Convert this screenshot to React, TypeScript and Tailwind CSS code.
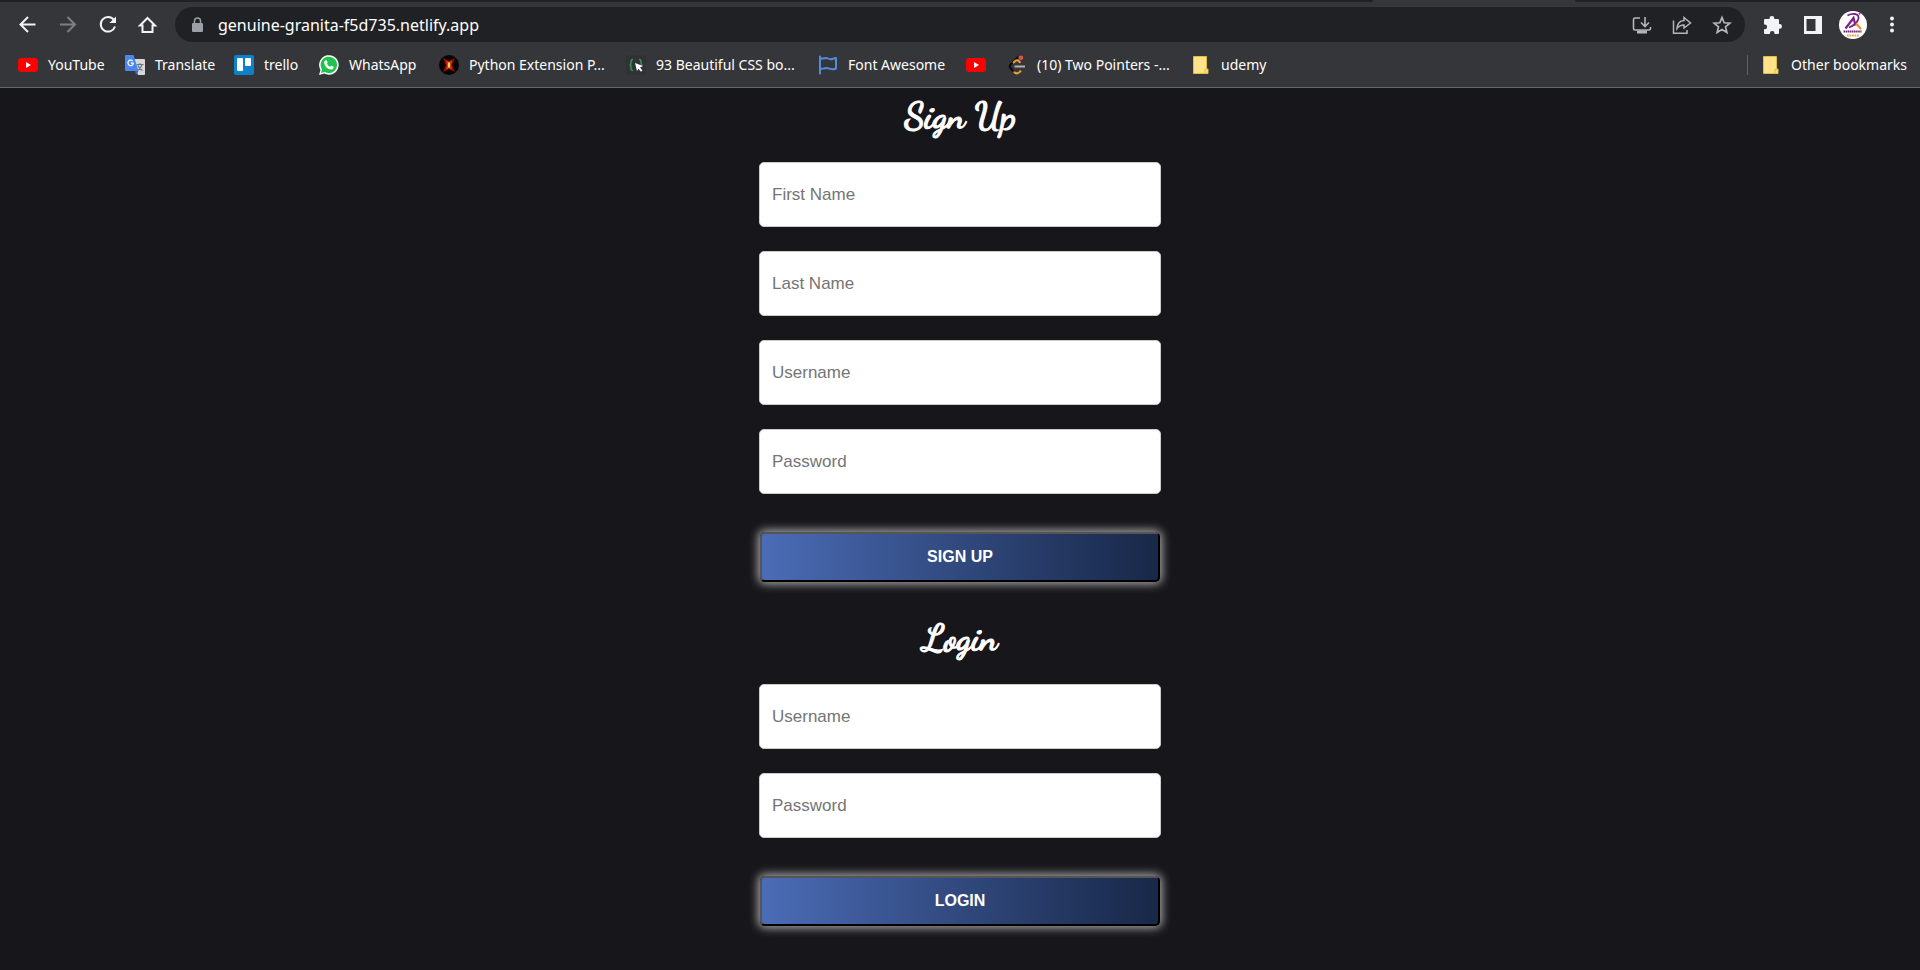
import React from "react";

const ui = "font-['Segoe_UI','Noto_Sans',sans-serif]";

const YouTubeIcon = () => (
  <svg width="20" height="20" viewBox="0 0 20 20" aria-hidden="true">
    <rect y="3" width="20" height="14" rx="3.5" fill="#f00" />
    <path d="M8 7v6l5-3z" fill="#fff" />
  </svg>
);

const TranslateIcon = () => (
  <svg width="20" height="20" viewBox="0 0 20 20" aria-hidden="true">
    <path d="M8 4h11q1 0 1 1v14q0 1-1 1h-6z" fill="#d8d8d8" />
    <path d="M11.5 9.5h7M15 8v1.500M17 9.500q-1 4-4.500 6M13 10.500q1 3 4.500 5" stroke="#607988" strokeWidth="1.100" fill="none" />
    <path d="M1 0h7.500l5 16H1q-1 0-1-1V1q0-1 1-1z" fill="#4a86ee" />
    <path d="M10 16h3.500L11 20z" fill="#3367d6" />
    <path d="M7.700 6.200A2.700 2.700 0 1 0 8.300 8.200H5.800" stroke="#fff" strokeWidth="1.200" fill="none" />
  </svg>
);

const TrelloIcon = () => (
  <svg width="20" height="20" viewBox="0 0 20 20" aria-hidden="true">
    <rect width="20" height="20" rx="2" fill="#0c82cd" />
    <rect x="3" y="3" width="6" height="13" rx="1" fill="#fff" />
    <rect x="11" y="3" width="6" height="8" rx="1" fill="#fff" />
  </svg>
);

const WhatsAppIcon = () => (
  <svg width="20" height="20" viewBox="0 0 20 20" aria-hidden="true">
    <path d="M0 20l1.500-5A9.800 9.800 0 1 1 5.300 18.600z" fill="#fff" />
    <path d="M2 18l1-3.600A8.200 8.200 0 1 1 5.800 17z" fill="#1fc24c" />
    <path d="M6.500 5.300h1.200l1 2.300-.8 1.200q1.200 2.300 3.400 3l1-1.200 2.300 1.100q.2 2.500-2.300 2.700-5.500-.5-7.200-6.500 0-1.700 1.400-2.600z" fill="#fff" />
  </svg>
);

const PythonExtIcon = () => (
  <svg width="20" height="20" viewBox="0 0 20 20" aria-hidden="true">
    <circle cx="10" cy="10" r="10" fill="#0a0303" />
    <path d="M4 3l6 3 6-3-3 7 3 7-6-3-6 3 3-7z" fill="#8c1004" />
    <path d="M7 5.500l3 1.500 3-1.500-1 4.500 1 4.500-3-1.500-3 1.500 1-4.500z" fill="#e8360a" />
    <path d="M9 7.500h2v5H9z" fill="#ffd84a" />
  </svg>
);

const CssIcon = () => (
  <svg width="20" height="20" viewBox="0 0 20 20" aria-hidden="true">
    <rect width="20" height="20" rx="2" fill="#303233" />
    <path d="M7 4.500q-2 0-2 2v2q0 1.500-1.500 1.500Q5 10 5 11.500v2q0 2 2 2M13 4.500q2 0 2 2v2q0 1.500 1.500 1.500" stroke="#2f9558" strokeWidth="1.500" fill="none" />
    <path d="M9 8l8 3-3 1.500 2.500 3-1.500 1.200-2.500-3L11 16z" fill="#fff" />
  </svg>
);

const FlagIcon = () => (
  <svg width="20" height="20" viewBox="0 0 20 20" aria-hidden="true">
    <path d="M2 1.500v17M2 3.500h3.500q2.500-1.200 4.500 0t5 .2l3-.700v10.500q-3.500 1.500-6.500.2T6 13.500l-4 .3" stroke="#538dd8" strokeWidth="2" fill="none" strokeLinecap="round" strokeLinejoin="round" />
  </svg>
);

const LeetIcon = () => (
  <svg width="20" height="20" viewBox="0 0 20 20" aria-hidden="true">
    <path d="M11 2L3.500 9.500q-1.500 1.800 0 3.500L6 16" stroke="#0b0b0b" strokeWidth="2" fill="none" />
    <path d="M6 8l2.500-2.300q1.500-1 3 0l2 2M7 17q2.500 2.500 5 .5l2-1.800" stroke="#f0a030" strokeWidth="2" fill="none" />
    <path d="M7.500 11.500H18" stroke="#b3b3b3" strokeWidth="2" />
    <circle cx="14" cy="2.700" r="2.300" fill="#d9534f" />
  </svg>
);

const FolderIcon = () => (
  <svg width="20" height="20" viewBox="0 0 20 20" aria-hidden="true">
    <path d="M2.500 1.500h13v12.500h1.500v4.500H2.500z" fill="#ffe28a" stroke="#e3bc3c" />
    <path d="M14 18v-4h2" fill="none" stroke="#e3bc3c" />
  </svg>
);

const bookmarks = [
  { label: "YouTube", icon: <YouTubeIcon />, width: "w-[107px]" },
  { label: "Translate", icon: <TranslateIcon />, width: "w-[109px]" },
  { label: "trello", icon: <TrelloIcon />, width: "w-[85px]" },
  { label: "WhatsApp", icon: <WhatsAppIcon />, width: "w-[120px]" },
  { label: "Python Extension P...", icon: <PythonExtIcon />, width: "w-[187px]" },
  { label: "93 Beautiful CSS bo...", icon: <CssIcon />, width: "w-[192px]" },
  { label: "Font Awesome", icon: <FlagIcon />, width: "w-[148px]" },
  { label: "", icon: <YouTubeIcon />, width: "w-[41px]" },
  { label: "(10) Two Pointers -...", icon: <LeetIcon />, width: "w-[184px]" },
  { label: "udemy", icon: <FolderIcon />, width: "w-[80px]" },
];

function IconButton({ label, children }: { label: string; children: React.ReactNode }) {
  return (
    <button type="button" aria-label={label} className="flex size-5 shrink-0 items-center justify-center">
      {children}
    </button>
  );
}

function Toolbar() {
  return (
    <div className="flex h-10 items-center px-[18px] pt-[5px]">
      <div className="flex gap-5 text-[#f1f3f4]">
        <IconButton label="Back">
          <svg width="20" height="20" viewBox="0 0 20 20" fill="none" stroke="currentColor" strokeWidth="2"><path d="M17.500 9.500H3M10 2L2.500 9.500 10 17" /></svg>
        </IconButton>
        <IconButton label="Forward">
          <svg width="20" height="20" viewBox="0 0 20 20" fill="none" stroke="#7d7f82" strokeWidth="2"><path d="M2 9.500h14.500M9.500 2L17 9.500 9.500 17" /></svg>
        </IconButton>
        <IconButton label="Reload">
          <svg width="20" height="20" viewBox="0 0 20 20" fill="none" stroke="currentColor" strokeWidth="2"><path d="M16 5A7.300 7.300 0 1 0 17 11.500" /><path d="M18 1.500V8h-6.500z" fill="currentColor" stroke="none" /></svg>
        </IconButton>
        <IconButton label="Home">
          <svg width="20" height="20" viewBox="0 0 20 20" fill="none" stroke="currentColor" strokeWidth="2"><path d="M2 10.500L9.500 3l7.500 7.500h-2.500V17h-10v-6.500z" /></svg>
        </IconButton>
      </div>
      <div className="ml-[17px] flex h-[35px] flex-1 items-center rounded-full bg-[#202124] pr-[13px] pl-3">
        <svg width="20" height="20" viewBox="0 0 20 20" aria-hidden="true">
          <rect x="5" y="8" width="11" height="9" rx="1" fill="#9aa0a6" />
          <path d="M7.500 8V6a3 3 0 0 1 6 0v2" fill="none" stroke="#9aa0a6" strokeWidth="1.500" />
        </svg>
        <input
          aria-label="Address"
          defaultValue="genuine-granita-f5d735.netlify.app"
          className="ml-[11px] min-w-0 flex-1 bg-transparent text-base leading-6 text-white outline-none"
        />
        <div className="flex gap-5 text-[#b5b6b8]">
          <IconButton label="Install app">
            <svg width="20" height="20" viewBox="0 0 20 20" fill="none" stroke="currentColor" strokeWidth="1.600"><path d="M8 3H3q-1.500 0-1.500 1.500v9Q1.500 15 3 15h14q1.500 0 1.500-1.500V12M13 2v9M9 7.500l4 4 4-4" /><path d="M5 17h10" strokeWidth="3" /></svg>
          </IconButton>
          <IconButton label="Share">
            <svg width="20" height="20" viewBox="0 0 20 20" fill="none" stroke="currentColor" strokeWidth="1.500"><path d="M1.500 5.500v12.800H15V15M12 2.500L18.500 8 12 13v-3q-4.500 0-7 3.500Q5.500 6 12 5.500z" /></svg>
          </IconButton>
          <IconButton label="Bookmark this page">
            <svg width="20" height="20" viewBox="0 0 20 20" fill="none" stroke="currentColor" strokeWidth="1.700"><path d="M10 2.500l2.200 5.300 5.700.4-4.400 3.700 1.400 5.600-4.900-3-4.900 3 1.400-5.600-4.400-3.700 5.700-.4z" /></svg>
          </IconButton>
        </div>
      </div>
      <div className="ml-[18px] flex items-center text-[#f1f3f4]">
        <IconButton label="Extensions">
          <svg width="20" height="20" viewBox="0 0 20 20" fill="currentColor"><path d="M2 4h4.500V3.500a2.400 2.400 0 0 1 4.800 0V4H15q1 0 1 1v4h.6a2.400 2.400 0 0 1 0 4.800H16V18q0 1-1 1h-3.500v-.8a2.300 2.300 0 0 0-4.600 0v.8H2q-1 0-1-1v-3.800h.8a2.300 2.300 0 0 0 0-4.600H1V5q0-1 1-1z" /></svg>
        </IconButton>
        <div className="ml-5 flex">
          <IconButton label="Side panel">
            <svg width="20" height="20" viewBox="0 0 20 20"><path d="M1 1h18v18H1zM3.500 4v12h9V4z" fill="currentColor" fillRule="evenodd" /></svg>
          </IconButton>
        </div>
        <button type="button" aria-label="Profile" className="ml-4 size-7">
          <svg width="28" height="28" viewBox="0 0 28 28">
            <circle cx="14" cy="14" r="14" fill="#fff" />
            <path d="M8.500 4.500Q12 2.500 16 3q5 1 3 6-2.500 5-9 7.500" fill="none" stroke="#7b2386" strokeWidth="1.800" />
            <path d="M6.500 17.500L14.500 7l2 7.500" fill="none" stroke="#7b2386" strokeWidth="2.200" />
            <circle cx="20.500" cy="2.800" r="1" fill="#c0268a" />
            <path d="M17 12.500l5 5.500" stroke="#f08a24" strokeWidth="2" />
            <path d="M4.500 20.500h18" stroke="#6d2879" strokeWidth="2.200" strokeDasharray="1.600 .5" />
            <path d="M8 24.500h12" stroke="#f4a04c" strokeWidth="2.200" strokeDasharray="1.800 .7" />
          </svg>
        </button>
        <div className="ml-[15px] flex">
          <IconButton label="Menu">
            <svg width="20" height="20" viewBox="0 0 20 20" fill="currentColor"><circle cx="10" cy="3.500" r="2" /><circle cx="10" cy="9.500" r="2" /><circle cx="10" cy="15.500" r="2" /></svg>
          </IconButton>
        </div>
      </div>
    </div>
  );
}

function BookmarkBar() {
  return (
    <nav aria-label="Bookmarks" className="flex h-[45px] items-center pr-[13px] pl-[18px] text-sm leading-5 whitespace-nowrap text-white">
      {bookmarks.map((b, i) => (
        <a key={i} href="#" aria-label={b.label || "Video"} className={`flex shrink-0 items-center gap-[10px] ${b.width}`}>
          <span className="shrink-0">{b.icon}</span>
          {b.label}
        </a>
      ))}
      <a href="#" className="ml-auto flex items-center gap-[10px] border-l border-[#5f6063] pl-[13px]">
        <FolderIcon />
        Other bookmarks
      </a>
    </nav>
  );
}

function Field({ label, type = "text" }: { label: string; type?: string }) {
  return (
    <input
      type={type}
      aria-label={label}
      placeholder={label}
      className="h-[65px] w-full rounded-[5px] border border-[#ccc] bg-white px-3 text-[17px] text-black placeholder:text-[#757575]"
    />
  );
}

function AuthForm({ title, action, children }: { title: string; action: string; children: React.ReactNode }) {
  return (
    <form className="flex w-full max-w-[402px] flex-col" onSubmit={(e) => e.preventDefault()}>
      <h1 className="text-center font-['Dancing_Script',cursive] text-4xl leading-[48px] font-bold text-white [-webkit-text-stroke:1px_white]">
        {title}
      </h1>
      <div className="mt-[21px] flex flex-col gap-6">{children}</div>
      <button
        type="submit"
        className="mx-px mt-[38px] h-[50px] rounded-[5px] border-2 border-t-[#555] border-r-black border-b-black border-l-[#555] bg-linear-to-r from-[#4b6cb7] to-[#182848] text-base font-bold text-white shadow-[0_0_10px_2px_#aaa]"
      >
        {action}
      </button>
    </form>
  );
}

export default function App() {
  return (
    <div className="flex min-h-screen flex-col bg-[#17161b]">
      <header className={`border-b border-[#66676a] bg-[#35363a] ${ui}`}>
        <div className="flex h-[2px] justify-end">
          <div className="flex-1 rounded-br-sm bg-[#202124]" />
          <div className="w-[202px]" />
          <div className="w-[345px] rounded-bl-sm bg-[#202124]" />
        </div>
        <Toolbar />
        <BookmarkBar />
      </header>
      <main className="flex flex-col items-center gap-[33px] px-4 pt-[5px] font-['Liberation_Sans',Arial,sans-serif]">
        <AuthForm title="Sign Up" action="SIGN UP">
          <Field label="First Name" />
          <Field label="Last Name" />
          <Field label="Username" />
          <Field label="Password" type="password" />
        </AuthForm>
        <AuthForm title="Login" action="LOGIN">
          <Field label="Username" />
          <Field label="Password" type="password" />
        </AuthForm>
      </main>
    </div>
  );
}
